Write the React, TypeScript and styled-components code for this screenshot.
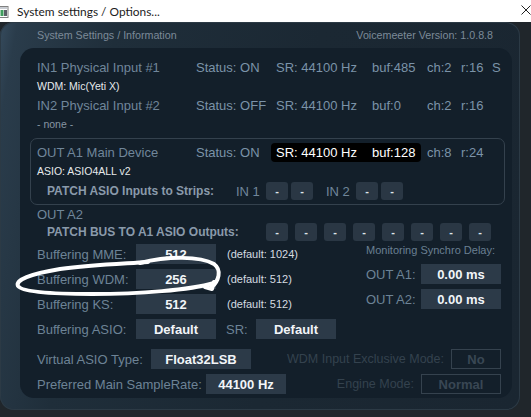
import React from 'react';
import styled, { createGlobalStyle } from 'styled-components';

const Global = createGlobalStyle`
  html, body { margin: 0; padding: 0; background: #20262b; overflow: hidden; }
  body { font-family: "Liberation Sans", Arial, sans-serif; }
  #root { width: 531px; height: 417px; }
`;

const Window = styled.div`
  position: relative;
  width: 531px;
  height: 417px;
  display: flex;
  flex-direction: column;
  background: #20262b;
  overflow: hidden;
`;

const TitleBar = styled.div`
  height: 22px;
  flex-shrink: 0;
  background: #ffffff;
  display: flex;
  align-items: center;
`;

const TitleText = styled.span`
  margin-left: 8px;
  font-family: Lato, "Noto Sans", sans-serif;
  font-size: 11.9px;
  color: #1b1b1b;
  white-space: nowrap;
`;

const CloseIcon = styled.svg`
  margin-left: auto;
  margin-top: -3px;
`;

const Frame = styled.div`
  width: 520px;
  height: 388px;
  border-radius: 14px;
  background: linear-gradient(100deg, #364b5d 0%, #2a3c4b 3%, #1f2e3a 20%, #1b2833 55%, #1a2631 100%);
  box-shadow: inset 0 0 0 1px #2c3a45;
  display: flex;
  flex-direction: column;
`;

const Header = styled.div`
  height: 26px;
  display: flex;
  align-items: center;
  justify-content: space-between;
  padding: 0 27px 0 37px;
  font-size: 10.7px;
  color: #7c8a98;
`;

const Panel = styled.div`
  margin-left: 20px;
  width: 492px;
  height: 350px;
  box-sizing: border-box;
  padding: 10px 11px 0 17px;
  background: #131f2a;
  border-radius: 14px;
  display: flex;
  flex-direction: column;
`;

const StatusRow = styled.div<{ $mt?: number; $h?: number }>`
  display: grid;
  grid-template-columns: 159px 80px 96px 55px 34px 31px 1fr;
  align-items: center;
  height: ${p => p.$h ?? 18}px;
  margin-top: ${p => p.$mt ?? 0}px;
  font-size: 13px;
  color: #7b93a8;
  white-space: nowrap;
`;

const RowLabel = styled.span`
  color: #70869a;
`;

const SubLine = styled.div<{ $mt?: number; $dim?: boolean }>`
  height: 14px;
  line-height: 14px;
  margin-top: ${p => p.$mt ?? 0}px;
  font-size: 10.5px;
  color: ${p => (p.$dim ? '#8795a3' : '#e6e9ec')};
`;

const OutBox = styled.div`
  margin: 7px 0 0 -7px;
  width: 475px;
  box-sizing: border-box;
  border: 1px solid #34414d;
  border-radius: 7px;
  padding: 4px 0 4px 6px;
  display: flex;
  flex-direction: column;
`;

const Pill = styled.span`
  grid-column: 3 / span 2;
  margin-left: -5px;
  width: 150px;
  height: 19px;
  box-sizing: border-box;
  padding-left: 5px;
  background: #000;
  border-radius: 4px;
  color: #ffffff;
  display: grid;
  grid-template-columns: 96px 1fr;
  align-items: center;
`;

const PatchRow = styled.div<{ $mt?: number }>`
  display: flex;
  align-items: center;
  height: 18px;
  margin-top: ${p => p.$mt ?? 0}px;
  padding-left: 10px;
`;

const PatchLabel = styled.span<{ $w: number }>`
  width: ${p => p.$w}px;
  flex-shrink: 0;
  font-size: 12px;
  font-weight: bold;
  color: #8a9aaa;
  white-space: nowrap;
`;

const InLabel = styled.span<{ $ml?: number }>`
  width: 30px;
  margin-left: ${p => p.$ml ?? 0}px;
  font-size: 13px;
  color: #70869a;
  white-space: nowrap;
`;

const BtnGroup = styled.div<{ $gap: number }>`
  display: flex;
  gap: ${p => p.$gap}px;
`;

const MiniBtn = styled.div`
  width: 22px;
  height: 18px;
  border-radius: 3px;
  background: #2a3744;
  color: #dfe5ea;
  font-size: 11px;
  font-weight: bold;
  display: flex;
  align-items: center;
  justify-content: center;
`;

const PlainLine = styled.div<{ $mt?: number }>`
  height: 15px;
  line-height: 15px;
  margin-top: ${p => p.$mt ?? 0}px;
  font-size: 13px;
  color: #70869a;
`;

const Section = styled.div<{ $mt?: number }>`
  display: flex;
  margin-top: ${p => p.$mt ?? 0}px;
`;

const LeftCol = styled.div`
  width: 329px;
  display: flex;
  flex-direction: column;
  gap: 5px;
`;

const RightCol = styled.div`
  display: flex;
  flex-direction: column;
`;

const FieldRow = styled.div<{ $mt?: number }>`
  display: flex;
  align-items: center;
  height: 20px;
  margin-top: ${p => p.$mt ?? 0}px;
`;

const FieldLabel = styled.span<{ $w: number; $ml?: number }>`
  width: ${p => p.$w}px;
  margin-left: ${p => p.$ml ?? 0}px;
  flex-shrink: 0;
  font-size: 13px;
  color: #6d8396;
  white-space: nowrap;
`;

const ValueBox = styled.div<{ $w: number }>`
  width: ${p => p.$w}px;
  height: 20px;
  flex-shrink: 0;
  background: #2c3a48;
  color: #f2f5f8;
  font-size: 13px;
  font-weight: bold;
  display: flex;
  align-items: center;
  justify-content: center;
`;

const DefaultNote = styled.span`
  margin-left: 11px;
  font-size: 11px;
  color: #d5dbe1;
  white-space: nowrap;
`;

const MonitorTitle = styled.div`
  height: 12px;
  line-height: 12px;
  font-size: 11px;
  color: #6a7f92;
  white-space: nowrap;
`;

const DimGroup = styled.div`
  margin-left: auto;
  display: flex;
  align-items: center;
`;

const DimLabel = styled.span`
  margin-right: 7px;
  font-size: 12.5px;
  color: #34424e;
  white-space: nowrap;
`;

const DimBox = styled.div<{ $w: number }>`
  width: ${p => p.$w}px;
  height: 20px;
  box-sizing: border-box;
  border: 1px solid #35424e;
  color: #394754;
  font-size: 13px;
  font-weight: bold;
  display: flex;
  align-items: center;
  justify-content: center;
`;

const Annotation = styled.svg`
  position: absolute;
  left: 0;
  top: 0;
  pointer-events: none;
`;

const StatusLine = ({ label, status, sr, buf, ch, r, extra, mt }: {
  label: string; status: string; sr: string; buf: string; ch: string; r: string; extra?: string; mt?: number;
}) => (
  <StatusRow $mt={mt}>
    <RowLabel>{label}</RowLabel>
    <span>{status}</span>
    <span>{sr}</span>
    <span>{buf}</span>
    <span>{ch}</span>
    <span>{r}</span>
    <span>{extra ?? ''}</span>
  </StatusRow>
);

export default function App() {
  return (
    <Window>
      <Global />
      <TitleBar>
        <svg width="9" height="13" viewBox="0 0 9 13">
          <rect x="-6" y="1.5" width="14" height="11" fill="#fff" stroke="#808080" />
          <rect x="0.5" y="5" width="3" height="6" fill="#3f9d5d" />
          <rect x="4" y="5" width="3" height="6" fill="#5a5f66" />
          <rect x="-5" y="2" width="12" height="2" fill="#c8ccd2" />
        </svg>
        <TitleText>System settings / Options...</TitleText>
        <CloseIcon width="10" height="10" viewBox="0 0 10 10">
          <path d="M0.5 0.5 L9.5 9.5 M9.5 0.5 L0.5 9.5" stroke="#222" strokeWidth="1" />
        </CloseIcon>
      </TitleBar>
      <Frame>
        <Header>
          <span>System Settings / Information</span>
          <span>Voicemeeter Version: 1.0.8.8</span>
        </Header>
        <Panel>
          <StatusLine label="IN1 Physical Input #1" status="Status: ON" sr="SR: 44100 Hz" buf="buf:485" ch="ch:2" r="r:16" extra="S" />
          <SubLine $mt={3}>WDM: Mic(Yeti X)</SubLine>
          <StatusLine mt={3} label="IN2 Physical Input #2" status="Status: OFF" sr="SR: 44100 Hz" buf="buf:0" ch="ch:2" r="r:16" />
          <SubLine $mt={3} $dim>- none -</SubLine>
          <OutBox>
            <StatusRow $h={19}>
              <RowLabel>OUT A1 Main Device</RowLabel>
              <span>Status: ON</span>
              <Pill>
                <span>SR: 44100 Hz</span>
                <span>buf:128</span>
              </Pill>
              <span>ch:8</span>
              <span>r:24</span>
              <span />
            </StatusRow>
            <SubLine $mt={2}>ASIO: ASIO4ALL v2</SubLine>
            <PatchRow $mt={4}>
              <PatchLabel $w={189}>PATCH ASIO Inputs to Strips:</PatchLabel>
              <InLabel>IN 1</InLabel>
              <BtnGroup $gap={3}>
                <MiniBtn>-</MiniBtn>
                <MiniBtn>-</MiniBtn>
              </BtnGroup>
              <InLabel $ml={13}>IN 2</InLabel>
              <BtnGroup $gap={3}>
                <MiniBtn>-</MiniBtn>
                <MiniBtn>-</MiniBtn>
              </BtnGroup>
            </PatchRow>
          </OutBox>
          <PlainLine $mt={2}>OUT A2</PlainLine>
          <PatchRow $mt={1}>
            <PatchLabel $w={219}>PATCH BUS TO A1 ASIO Outputs:</PatchLabel>
            <BtnGroup $gap={7}>
              {Array.from({ length: 8 }).map((_, i) => (
                <MiniBtn key={i}>-</MiniBtn>
              ))}
            </BtnGroup>
          </PatchRow>
          <Section $mt={3}>
            <LeftCol>
              <FieldRow>
                <FieldLabel $w={99}>Buffering MME:</FieldLabel>
                <ValueBox $w={80}>512</ValueBox>
                <DefaultNote>(default: 1024)</DefaultNote>
              </FieldRow>
              <FieldRow>
                <FieldLabel $w={99}>Buffering WDM:</FieldLabel>
                <ValueBox $w={80}>256</ValueBox>
                <DefaultNote>(default: 512)</DefaultNote>
              </FieldRow>
              <FieldRow>
                <FieldLabel $w={99}>Buffering KS:</FieldLabel>
                <ValueBox $w={80}>512</ValueBox>
                <DefaultNote>(default: 512)</DefaultNote>
              </FieldRow>
              <FieldRow>
                <FieldLabel $w={99}>Buffering ASIO:</FieldLabel>
                <ValueBox $w={80}>Default</ValueBox>
                <FieldLabel $w={30} $ml={10}>SR:</FieldLabel>
                <ValueBox $w={80}>Default</ValueBox>
              </FieldRow>
            </LeftCol>
            <RightCol>
              <MonitorTitle>Monitoring Synchro Delay:</MonitorTitle>
              <FieldRow $mt={8}>
                <FieldLabel $w={55}>OUT A1:</FieldLabel>
                <ValueBox $w={80}>0.00 ms</ValueBox>
              </FieldRow>
              <FieldRow $mt={5}>
                <FieldLabel $w={55}>OUT A2:</FieldLabel>
                <ValueBox $w={80}>0.00 ms</ValueBox>
              </FieldRow>
            </RightCol>
          </Section>
          <FieldRow $mt={10}>
            <FieldLabel $w={114}>Virtual ASIO Type:</FieldLabel>
            <ValueBox $w={100}>Float32LSB</ValueBox>
            <DimGroup>
              <DimLabel>WDM Input Exclusive Mode:</DimLabel>
              <DimBox $w={50}>No</DimBox>
            </DimGroup>
          </FieldRow>
          <FieldRow $mt={5}>
            <FieldLabel $w={169}>Preferred Main SampleRate:</FieldLabel>
            <ValueBox $w={80}>44100 Hz</ValueBox>
            <DimGroup>
              <DimLabel>Engine Mode:</DimLabel>
              <DimBox $w={80}>Normal</DimBox>
            </DimGroup>
          </FieldRow>
        </Panel>
      </Frame>
      <Annotation width="531" height="417" viewBox="0 0 531 417">
        <path
          d="M 140 263 C 168 256, 200 256, 214 264 C 222 270, 219 281, 211 288 M 205 287 L 212 289 L 214 282"
          fill="none" stroke="#ffffff" strokeWidth="4" strokeLinecap="round" strokeLinejoin="round"
        />
        <path
          d="M 214 283 C 190 290, 140 294, 92 294 C 50 294, 22 292, 18 286 C 15 280, 30 274, 60 269 C 90 265, 118 264, 148 262"
          fill="none" stroke="#ffffff" strokeWidth="4" strokeLinecap="round" strokeLinejoin="round"
        />
      </Annotation>
    </Window>
  );
}
